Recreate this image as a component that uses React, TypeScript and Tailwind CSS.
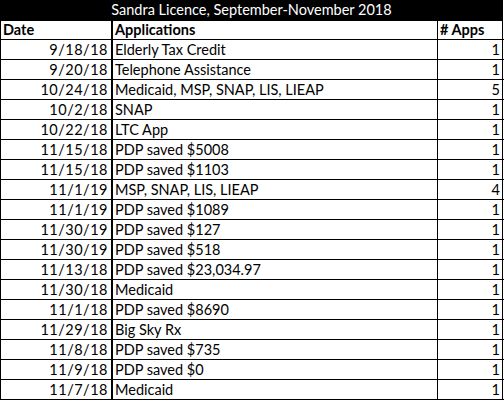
const rows: [string, string, number][] = [
	["9/18/18", "Elderly Tax Credit", 1],
	["9/20/18", "Telephone Assistance", 1],
	["10/24/18", "Medicaid, MSP, SNAP, LIS, LIEAP", 5],
	["10/2/18", "SNAP", 1],
	["10/22/18", "LTC App", 1],
	["11/15/18", "PDP saved $5008", 1],
	["11/15/18", "PDP saved $1103", 1],
	["11/1/19", "MSP, SNAP, LIS, LIEAP", 4],
	["11/1/19", "PDP saved $1089", 1],
	["11/30/19", "PDP saved $127", 1],
	["11/30/19", "PDP saved $518", 1],
	["11/13/18", "PDP saved $23,034.97", 1],
	["11/30/18", "Medicaid", 1],
	["11/1/18", "PDP saved $8690", 1],
	["11/29/18", "Big Sky Rx", 1],
	["11/8/18", "PDP saved $735", 1],
	["11/9/18", "PDP saved $0", 1],
	["11/7/18", "Medicaid", 1],
];

const Row = ({ date, app, count }: { date: string; app: string; count: number }) => {
	return (
		<div className="grid h-[20px] grid-cols-[113px_325px_65px] border-b border-black leading-[19px]">
			<div className="border-l border-r-2 border-black pr-[3px] text-right tracking-[0.5px]">{date}</div>
			<div className="border-r border-black pl-[2px]">{app}</div>
			<div className="border-r border-black pr-[2px] text-right">{count}</div>
		</div>
	);
};

export default function App() {
	return (
		<div className="w-[504px] bg-white text-[14.5px] text-black" style={{ fontFamily: "Lato, 'Liberation Sans', sans-serif" }}>
			<div className="h-[21px] w-[503px] bg-black text-center leading-[20px] text-white">
				Sandra Licence, September-November 2018
			</div>
			<div className="grid h-[19px] grid-cols-[113px_325px_65px] border-b border-black font-bold leading-[18px]">
				<div className="border-l border-r-2 border-black pl-[2px]">Date</div>
				<div className="border-r border-black pl-[2px]">Applications</div>
				<div className="border-r border-black pl-[2px]"># Apps</div>
			</div>
			{rows.map(([date, app, count], i) => (
				<Row key={i} date={date} app={app} count={count} />
			))}
		</div>
	);
}
